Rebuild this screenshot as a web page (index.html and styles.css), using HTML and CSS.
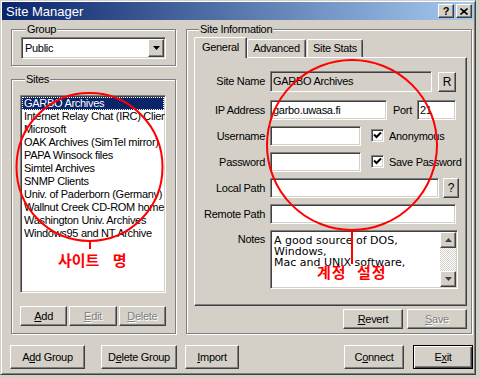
FILE: index.html
```html
<!DOCTYPE html>
<html lang="en">
<head>
    <meta charset="UTF-8">
    <title>Site Manager</title>
    <link rel="stylesheet" href="styles.css">
</head>
<body>

<div class="window">
    <!-- Title bar -->
    <div class="titlebar">
        <span class="title">Site Manager</span>
        <span class="tb-btns">
            <span class="tb-btn">?</span>
            <span class="tb-btn">
                <svg width="8" height="7" viewBox="0 0 8 7"><path d="M0.5 0.5 L7.5 6.5 M7.5 0.5 L0.5 6.5" stroke="#000" stroke-width="1.6"/></svg>
            </span>
        </span>
    </div>

    <div class="content">
        <div class="main">
            <div class="col-left">
                <!-- Group -->
                <div class="group group-top">
                    <span class="legend">Group</span>
                    <div class="combo">
                        <span class="combo-text">Public</span>
                        <span class="combo-btn">
                            <svg width="7" height="4" viewBox="0 0 7 4"><path d="M0 0 H7 L3.5 4 Z" fill="#000"/></svg>
                        </span>
                    </div>
                </div>

                <!-- Sites -->
                <div class="group group-sites">
                    <span class="legend">Sites</span>
                    <ul class="listbox">
                        <li class="sel">GARBO Archives</li>
                        <li>Internet Relay Chat (IRC) Clients</li>
                        <li>Microsoft</li>
                        <li>OAK Archives (SimTel mirror)</li>
                        <li>PAPA Winsock files</li>
                        <li>Simtel Archives</li>
                        <li>SNMP Clients</li>
                        <li>Univ. of Paderborn (Germany)</li>
                        <li>Wallnut Creek CD-ROM home</li>
                        <li>Washington Univ. Archives</li>
                        <li>Windows95 and NT Archive</li>
                    </ul>
                    <div class="btn-row">
                        <button class="btn"><u>A</u>dd</button>
                        <button class="btn disabled"><u>E</u>dit</button>
                        <button class="btn disabled"><u>D</u>elete</button>
                    </div>
                </div>
            </div>

            <!-- Site Information -->
            <div class="group group-info">
                <span class="legend">Site Information</span>
                <div class="tabs">
                    <span class="tab active tab-general">General</span>
                    <span class="tab tab-advanced">Advanced</span>
                    <span class="tab tab-stats">Site Stats</span>
                </div>
                <div class="panel">
                    <label class="lbl lbl-first">Site Name</label>
                    <div class="row">
                        <span class="field readonly w-name">GARBO Archives</span>
                        <button class="btn small-btn btn-r">R</button>
                    </div>

                    <label class="lbl">IP Address</label>
                    <div class="row">
                        <span class="field w-ip">garbo.uwasa.fi</span>
                        <span class="port-lbl">Port</span>
                        <span class="field w-port">21</span>
                    </div>

                    <label class="lbl">Username</label>
                    <div class="row">
                        <span class="field w-short"></span>
                        <span class="check">
                            <svg width="9" height="9" viewBox="0 0 9 9"><path d="M1 3.5 L3.5 6 L8 1.5" fill="none" stroke="#000" stroke-width="2"/></svg>
                        </span>
                        <span class="check-lbl">Anonymous</span>
                    </div>

                    <label class="lbl">Password</label>
                    <div class="row">
                        <span class="field w-short"></span>
                        <span class="check">
                            <svg width="9" height="9" viewBox="0 0 9 9"><path d="M1 3.5 L3.5 6 L8 1.5" fill="none" stroke="#000" stroke-width="2"/></svg>
                        </span>
                        <span class="check-lbl">Save Password</span>
                    </div>

                    <label class="lbl">Local Path</label>
                    <div class="row">
                        <span class="field w-local"></span>
                        <button class="btn small-btn btn-q">?</button>
                    </div>

                    <label class="lbl">Remote Path</label>
                    <div class="row">
                        <span class="field w-full"></span>
                    </div>

                    <label class="lbl lbl-notes">Notes</label>
                    <div class="notes">
                        <div class="notes-text">A good source of DOS,<br>Windows,<br>Mac and UNIX software,</div>
                        <div class="scrollbar">
                            <span class="sb-btn">
                                <svg width="7" height="4" viewBox="0 0 7 4"><path d="M0 4 H7 L3.5 0 Z" fill="#404040"/></svg>
                            </span>
                            <span class="sb-track"></span>
                            <span class="sb-btn">
                                <svg width="7" height="4" viewBox="0 0 7 4"><path d="M0 0 H7 L3.5 4 Z" fill="#404040"/></svg>
                            </span>
                        </div>
                    </div>
                </div>
                <div class="panel-btns">
                    <button class="btn w60"><u>R</u>evert</button>
                    <button class="btn w60 disabled"><u>S</u>ave</button>
                </div>
            </div>
        </div>

        <!-- Bottom buttons -->
        <div class="bottom">
            <button class="btn tall w-addgroup">A<u>d</u>d Group</button>
            <button class="btn tall w-delgroup">D<u>e</u>lete Group</button>
            <button class="btn tall w-import"><u>I</u>mport</button>
            <button class="btn tall w60 btn-connect">C<u>o</u>nnect</button>
            <button class="btn tall w60 btn-default">E<u>x</u>it</button>
        </div>
    </div>

    <!-- Red annotations drawn over the dialog -->
    <svg class="annot" width="480" height="378" viewBox="0 0 480 378">
        <ellipse cx="89.5" cy="167" rx="73" ry="74" fill="none" stroke="#ff0000" stroke-width="2"/>
        <line x1="90" y1="241" x2="90" y2="249" stroke="#ff0000" stroke-width="2"/>
        <ellipse cx="352" cy="145" rx="85" ry="85" fill="none" stroke="#ff0000" stroke-width="2"/>
        <line x1="352" y1="230" x2="352" y2="264" stroke="#ff0000" stroke-width="2"/>
    </svg>
    <span class="note note-sites">사이트 명</span>
    <span class="note note-account">계정 설정</span>
</div>

</body>
</html>
```

FILE: styles.css
```css
body {
    margin: 0;
    background: #d4d0c8;
    font-family: "Liberation Sans", Arial, sans-serif;
    font-size: 11px;
    letter-spacing: -0.3px;
    color: #000;
}
.window {
    position: relative;
    width: 476px;
    height: 375px;
    box-sizing: border-box;
    padding: 1px;
    border: 1px solid;
    border-color: #d4d0c8 #404040 #404040 #d4d0c8;
    box-shadow: inset 1px 1px #fff, inset -1px -1px #808080;
    background: #d4d0c8;
}
.titlebar {
    height: 18px;
    display: flex;
    align-items: center;
    justify-content: space-between;
    padding: 0 2px 0 4px;
    background: linear-gradient(to right, #0a246a, #a6caf0);
    color: #fff;
}
.title {
    font-size: 13px;
    letter-spacing: 0;
}
.tb-btns {
    display: flex;
    gap: 2px;
}
.tb-btn {
    width: 16px;
    height: 14px;
    box-sizing: border-box;
    display: flex;
    align-items: center;
    justify-content: center;
    background: #d4d0c8;
    color: #000;
    font-weight: bold;
    font-size: 11px;
    border: 1px solid;
    border-color: #fff #404040 #404040 #fff;
    box-shadow: inset -1px -1px #808080;
}
.content {
    padding: 9px 1px 0 9px;
}
.main {
    display: flex;
    gap: 10px;
}
.col-left {
    width: 165px;
    display: flex;
    flex-direction: column;
}
.group {
    box-sizing: border-box;
    border: 1px solid #808080;
    box-shadow: inset 1px 1px #fff, 1px 1px #fff;
}
.legend {
    display: block;
    width: max-content;
    height: 14px;
    line-height: 14px;
    margin: -8px 0 0 5px;
    padding: 0 1px;
    background: #d4d0c8;
}

/* sunken / raised edges */
.combo, .listbox, .field, .check, .notes {
    box-sizing: border-box;
    border: 1px solid;
    border-color: #808080 #fff #fff #808080;
    box-shadow: inset 1px 1px #404040, inset -1px -1px #d4d0c8;
    padding: 1px;
    background: #fff;
}
.btn, .combo-btn, .sb-btn {
    box-sizing: border-box;
    background: #d4d0c8;
    border: 1px solid;
    border-color: #fff #404040 #404040 #fff;
    box-shadow: inset -1px -1px #808080;
}

.group-top {
    height: 37px;
    padding-left: 9px;
}
.combo {
    width: 145px;
    height: 22px;
    margin-top: 1px;
    display: flex;
}
.combo-text {
    flex: 1;
    line-height: 18px;
    padding-left: 2px;
}
.combo-btn {
    width: 16px;
    height: 18px;
    display: flex;
    align-items: center;
    justify-content: center;
}

.group-sites {
    margin-top: 13px;
    height: 255px;
    padding-left: 8px;
}
.listbox {
    list-style: none;
    margin: 9px 0 0;
    width: 146px;
    height: 198px;
    overflow: hidden;
}
.listbox li {
    height: 13px;
    line-height: 13px;
    padding-left: 2px;
    white-space: nowrap;
}
.listbox li.sel {
    background: #0a246a;
    color: #fff;
    outline: 1px dotted #fff;
    outline-offset: -1px;
}
.btn-row {
    display: flex;
    gap: 2px;
    width: 146px;
    margin-top: 13px;
}
.btn-row .btn {
    flex: 1;
}

.btn {
    height: 20px;
    padding: 0;
    font: inherit;
    letter-spacing: inherit;
    color: #000;
    text-align: center;
}
.btn.disabled {
    color: #808080;
    text-shadow: 1px 1px #fff;
}
.btn.tall {
    height: 24px;
}
.w60 {
    width: 60px;
}

.group-info {
    width: 286px;
    height: 305px;
    padding: 0 4px 0 7px;
}
.tabs {
    position: relative;
    z-index: 1;
    display: flex;
    align-items: flex-end;
    height: 20px;
    margin-top: 1px;
}
.tab {
    box-sizing: border-box;
    height: 18px;
    line-height: 16px;
    text-align: center;
    border: 1px solid;
    border-bottom: none;
    border-color: #fff #404040 transparent #fff;
    box-shadow: inset -1px 0 #808080;
    border-radius: 2px 2px 0 0;
}
.tab.active {
    height: 21px;
    margin-bottom: -1px;
    background: #d4d0c8;
    line-height: 18px;
}
.tab-general { width: 53px; }
.tab-advanced { width: 59px; }
.tab-stats { width: 56px; margin-left: 1px; }

.panel {
    box-sizing: border-box;
    height: 249px;
    border: 1px solid;
    border-color: #fff #404040 #404040 #fff;
    box-shadow: inset -1px -1px #808080;
    padding: 13px 8px 0 0;
    display: grid;
    grid-template-columns: 70px 188px;
    grid-template-rows: 23px repeat(5, 20px) 59px;
    column-gap: 5px;
    row-gap: 6px;
    align-content: start;
}
.lbl {
    text-align: right;
    line-height: 20px;
}
.lbl-first {
    line-height: 21px;
}
.lbl-notes {
    line-height: 18px;
}
.row {
    display: flex;
    align-items: flex-start;
    white-space: nowrap;
}
.field {
    flex: none;
    height: 20px;
    line-height: 16px;
    padding-left: 2px;
    white-space: nowrap;
    overflow: hidden;
}
.field.readonly {
    height: 21px;
    line-height: 17px;
    background: #d4d0c8;
}
.w-name { width: 162px; }
.w-ip { width: 117px; }
.w-port { width: 39px; }
.w-short { width: 91px; }
.w-local { width: 169px; }
.w-full { width: 186px; }
.small-btn {
    flex: none;
    font-size: 12px;
}
.btn-r {
    width: 18px;
    margin: 1px 0 0 6px;
}
.btn-q {
    width: 16px;
    margin-left: 4px;
}
.port-lbl {
    line-height: 20px;
    margin: 0 5px 0 6px;
}
.check {
    flex: none;
    width: 13px;
    height: 13px;
    margin: 3px 0 0 10px;
    display: flex;
    align-items: center;
    justify-content: center;
}
.check-lbl {
    flex: none;
    line-height: 20px;
    margin-left: 5px;
}
.notes {
    width: 188px;
    height: 59px;
    display: flex;
}
.notes-text {
    flex: 1;
    font-family: "DejaVu Sans", sans-serif;
    font-size: 11px;
    letter-spacing: 0;
    line-height: 11px;
    padding: 3px 0 0 2px;
    white-space: nowrap;
    overflow: hidden;
}
.scrollbar {
    width: 16px;
    display: flex;
    flex-direction: column;
}
.sb-btn {
    height: 16px;
    display: flex;
    align-items: center;
    justify-content: center;
}
.sb-track {
    flex: 1;
    background: repeating-conic-gradient(#fff 0 25%, #d4d0c8 0 50%) 0 0 / 2px 2px;
}
.panel-btns {
    display: flex;
    justify-content: flex-end;
    gap: 4px;
    margin-top: 3px;
    width: 273px;
}

.bottom {
    display: flex;
    margin: 11px 0 0 -1px;
}
.w-addgroup { width: 75px; }
.w-delgroup { width: 76px; margin-left: 16px; }
.w-import { width: 54px; margin-left: 8px; }
.btn-connect { margin-left: auto; }
.btn-default {
    margin-left: 9px;
    border: 1px solid #000;
    box-shadow: inset 1px 1px #fff, inset -1px -1px #404040, inset -2px -2px #808080;
}

/* annotations over the dialog */
.annot {
    position: absolute;
    left: -1px;
    top: -1px;
    pointer-events: none;
}
.note {
    position: absolute;
    font-family: "Noto Sans CJK KR", sans-serif;
    font-weight: bold;
    font-size: 15px;
    line-height: 16px;
    letter-spacing: 0;
    color: #ff0000;
}
.note-sites {
    left: 57px;
    top: 251px;
    word-spacing: 10px;
}
.note-account {
    left: 316px;
    top: 263px;
    letter-spacing: 1px;
    word-spacing: 6px;
}
```
